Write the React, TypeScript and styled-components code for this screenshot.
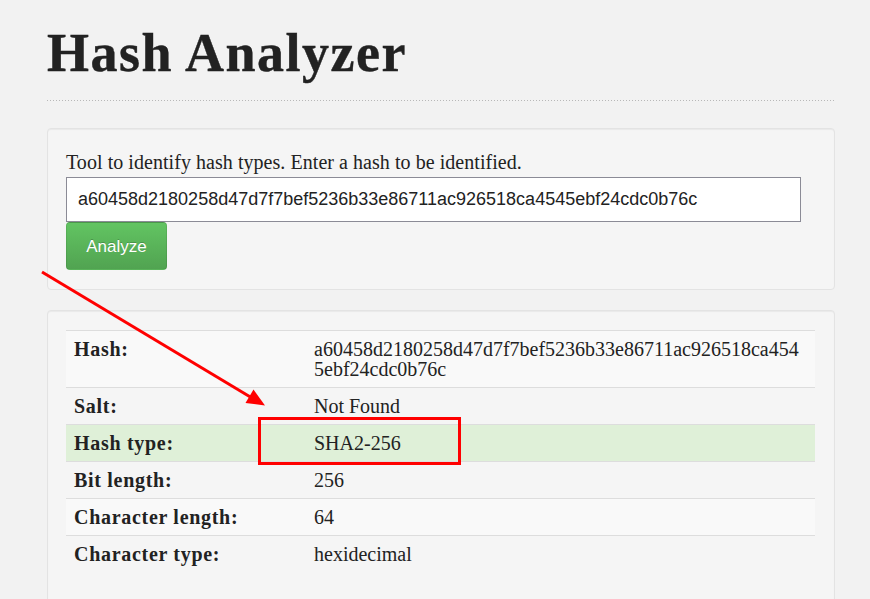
import React from "react";
import styled, { createGlobalStyle } from "styled-components";

const GlobalStyle = createGlobalStyle`
  html, body {
    margin: 0;
    padding: 0;
    background: #f2f2f2;
  }
  body {
    font-family: "Liberation Serif", "Times New Roman", serif;
    color: #222;
  }
  * { box-sizing: border-box; }
`;

const Page = styled.div`
  position: relative;
  width: 870px;
  height: 599px;
  overflow: hidden;
  padding: 23px 0 0 47px;
`;

const Container = styled.div`
  width: 788px;
`;

const Header = styled.header`
  margin-bottom: 27px;
  padding-bottom: 18px;
  background-image: linear-gradient(to right, #b8b8b8 1px, transparent 1px);
  background-size: 3px 1px;
  background-repeat: repeat-x;
  background-position: left bottom;
`;

const Title = styled.h1`
  margin: 0;
  font-family: "Liberation Serif", "Times New Roman", serif;
  font-weight: bold;
  font-size: 54px;
  line-height: 60px;
  letter-spacing: 1.5px;
  color: #222;
  -webkit-text-stroke: 0.4px #222;
`;

const Well = styled.section`
  background: #f5f5f5;
  border: 1px solid #e3e3e3;
  border-radius: 4px;
  box-shadow: inset 0 1px 1px rgba(0, 0, 0, 0.05);
  padding: 19px 19px 19px 18px;
  margin-bottom: 20px;
`;

const Label = styled.label`
  display: block;
  font-size: 20px;
  line-height: 29px;
  height: 29px;
  letter-spacing: 0.05px;
  color: #222;
`;

const HashInput = styled.input`
  display: block;
  width: 735px;
  height: 45px;
  margin: 0;
  padding: 0 11px;
  border: 1px solid #8b8b96;
  border-radius: 0;
  background: #fff;
  font-family: "Liberation Sans", Tahoma, sans-serif;
  font-size: 18px;
  color: #222;
  outline: none;
`;

const AnalyzeButton = styled.button`
  display: block;
  width: 101px;
  height: 48px;
  margin: 0;
  padding: 2px 0 0;
  border: 1px solid rgba(0, 0, 0, 0.08);
  border-radius: 4px;
  background: linear-gradient(to bottom, #62c462, #51a351);
  color: #fff;
  font-family: "Liberation Sans", Tahoma, sans-serif;
  font-size: 17px;
  text-shadow: 0 -1px 0 rgba(0, 0, 0, 0.2);
  cursor: pointer;
`;

const ResultWell = styled(Well)`
  height: 320px;
  margin-bottom: 0;
`;

const Table = styled.table`
  width: 749px;
  border-collapse: collapse;
  border-spacing: 0;
  table-layout: fixed;
`;

const Row = styled.tr<{ $tone: "stripe" | "plain" | "success" }>`
  background: ${(p) =>
    p.$tone === "stripe" ? "#f9f9f9" : p.$tone === "success" ? "#dff0d8" : "transparent"};
`;

const HeadCell = styled.th`
  width: 240px;
  padding: 8px;
  border-top: 1px solid #dddddd;
  text-align: left;
  vertical-align: top;
  font-weight: bold;
  font-size: 20px;
  line-height: 20px;
  letter-spacing: 0.7px;
  color: #222;
`;

const ValueCell = styled.td`
  padding: 8px;
  border-top: 1px solid #dddddd;
  vertical-align: top;
  font-size: 20px;
  line-height: 20px;
  color: #222;
  word-break: break-all;
`;

const Overlay = styled.svg`
  position: absolute;
  left: 0;
  top: 0;
  pointer-events: none;
`;

const Highlight = styled.div`
  position: absolute;
  left: 258px;
  top: 417px;
  width: 203px;
  height: 48px;
  border: 3px solid #ff0000;
  pointer-events: none;
`;

const HASH = "a60458d2180258d47d7f7bef5236b33e86711ac926518ca4545ebf24cdc0b76c";

const rows: { label: string; value: string; tone: "stripe" | "plain" | "success" }[] = [
  { label: "Hash:", value: HASH, tone: "stripe" },
  { label: "Salt:", value: "Not Found", tone: "plain" },
  { label: "Hash type:", value: "SHA2-256", tone: "success" },
  { label: "Bit length:", value: "256", tone: "plain" },
  { label: "Character length:", value: "64", tone: "stripe" },
  { label: "Character type:", value: "hexidecimal", tone: "plain" },
];

export default function App() {
  return (
    <>
      <GlobalStyle />
      <Page>
        <Container>
          <Header>
            <Title>Hash Analyzer</Title>
          </Header>
          <Well>
            <Label htmlFor="hash">Tool to identify hash types. Enter a hash to be identified.</Label>
            <HashInput id="hash" type="text" defaultValue={HASH} />
            <AnalyzeButton type="button">Analyze</AnalyzeButton>
          </Well>
          <ResultWell>
            <Table>
              <tbody>
                {rows.map((r) => (
                  <Row key={r.label} $tone={r.tone}>
                    <HeadCell>{r.label}</HeadCell>
                    <ValueCell>{r.value}</ValueCell>
                  </Row>
                ))}
              </tbody>
            </Table>
          </ResultWell>
        </Container>
        <Highlight />
        <Overlay width="870" height="599" viewBox="0 0 870 599">
          <line x1="42" y1="272" x2="252" y2="398" stroke="#ff0000" strokeWidth="3" />
          <polygon points="265,405.5 245.5,403 253.5,389.5" fill="#ff0000" />
        </Overlay>
      </Page>
    </>
  );
}
